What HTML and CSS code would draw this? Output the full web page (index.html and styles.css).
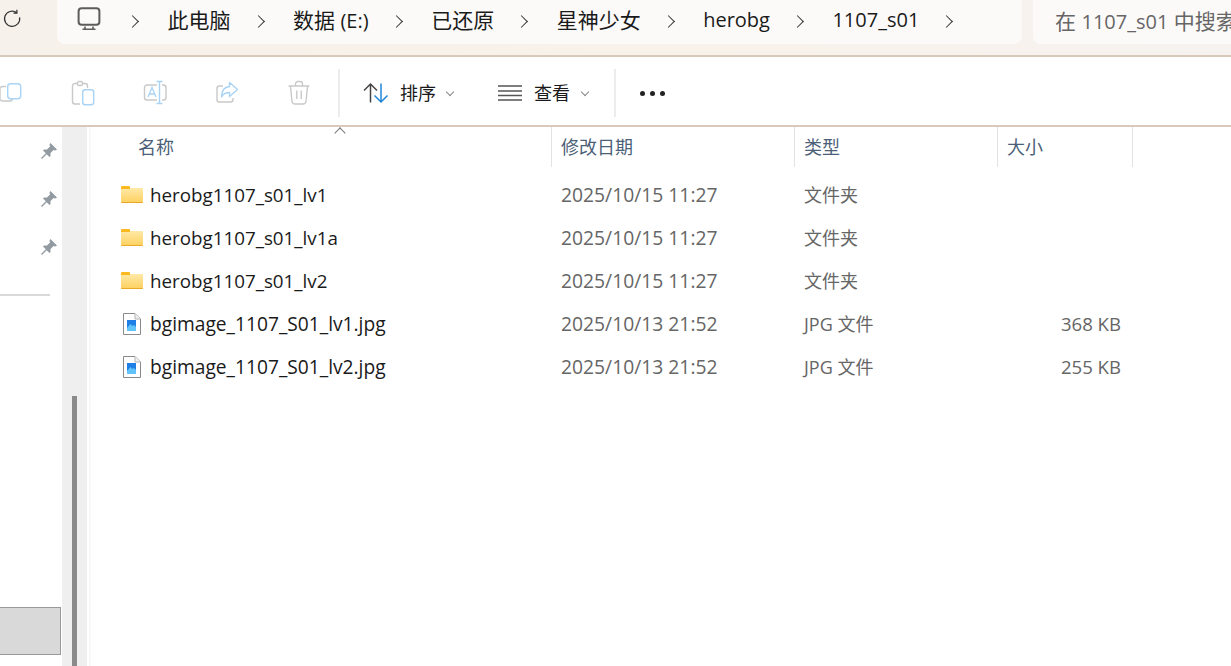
FILE: index.html
```html
<!DOCTYPE html>
<html lang="zh-CN">
<head>
  <meta charset="UTF-8">
  <title>1107_s01</title>
  <link rel="stylesheet" href="styles.css">
</head>
<body>

  <!-- Address bar -->
  <header class="topbar">
    <svg class="refresh" width="20" height="20" viewBox="0 0 20 20"><path d="M16.6 8.4A7.6 7.6 0 1 1 13.6 3.6M13.9 0.8V4.2H10.5" fill="none" stroke="#333" stroke-width="1.2"/></svg>
    <nav class="address">
      <svg class="monitor" width="24" height="24" viewBox="0 0 24 24"><rect x="1.6" y="1.2" width="20.8" height="16.6" rx="3" fill="none" stroke="#5c5c5c" stroke-width="2"/><path d="M8 19.5V22M16 19.5V22M5.5 22.3H18.5" fill="none" stroke="#5c5c5c" stroke-width="1.6"/></svg>
      <span class="chev"></span>
      <span class="crumb">此电脑</span>
      <span class="chev"></span>
      <span class="crumb">数据 <span class="latin">(E:)</span></span>
      <span class="chev"></span>
      <span class="crumb">已还原</span>
      <span class="chev"></span>
      <span class="crumb">星神少女</span>
      <span class="chev"></span>
      <span class="crumb latin">herobg</span>
      <span class="chev"></span>
      <span class="crumb latin">1107_s01</span>
      <span class="chev"></span>
    </nav>
    <div class="search">在 <span class="latin">1107_s01</span> 中搜索</div>
  </header>

  <!-- Command bar -->
  <section class="toolbar">
    <div class="tool-icons">
      <svg width="24" height="26" viewBox="0 0 24 26"><path d="M7 6.5H3.5A2.5 2.5 0 0 0 1 9V18.500A2.500 2.500 0 0 0 3.500 21H11A2.500 2.500 0 0 0 13.500 19" fill="none" stroke="#c9c9c9" stroke-width="1.400"/><rect x="8.700" y="3.700" width="13" height="15" rx="3" fill="none" stroke="#a9d3f5" stroke-width="1.400"/></svg>
      <svg width="24" height="26" viewBox="0 0 24 26"><path d="M7 3.500H4A2.500 2.500 0 0 0 1.500 6V21.500A2.500 2.500 0 0 0 4 24H9M16.500 8V6A2.500 2.500 0 0 0 14 3.500H11" fill="none" stroke="#c9c9c9" stroke-width="1.400"/><rect x="6.500" y="1.500" width="5" height="4" rx="1.500" fill="none" stroke="#c9c9c9" stroke-width="1.400"/><rect x="11.700" y="9.700" width="11" height="15" rx="2.500" fill="none" stroke="#a9d3f5" stroke-width="1.400"/></svg>
      <svg width="24" height="26" viewBox="0 0 24 26"><path d="M14 5H4A2.500 2.500 0 0 0 1.500 7.500V17.500A2.500 2.500 0 0 0 4 20H14M19 5H20.500A2.500 2.500 0 0 1 23 7.500V17.500A2.500 2.500 0 0 1 20.500 20H19" fill="none" stroke="#c9c9c9" stroke-width="1.400"/><path d="M5 17L9 7.500L13 17M6.300 14H11.700" fill="none" stroke="#a9d3f5" stroke-width="1.300"/><path d="M13.500 1.500H19.500M16.500 1.500V23.500M13.500 23.500H19.500" fill="none" stroke="#a9d3f5" stroke-width="1.400"/></svg>
      <svg width="24" height="26" viewBox="0 0 24 26"><path d="M8 6H4.500A2.500 2.500 0 0 0 2 8.500V19.500A2.500 2.500 0 0 0 4.500 22H15.500A2.500 2.500 0 0 0 18 19.500V18" fill="none" stroke="#c9c9c9" stroke-width="1.400"/><path d="M14.500 2.500L22.500 9.500L14.500 16.500V12.500C10.500 12.500 8 14 6.500 17C6.500 11 9.500 7 14.500 6.500Z" fill="none" stroke="#a9d3f5" stroke-width="1.400" stroke-linejoin="round"/></svg>
      <svg width="24" height="26" viewBox="0 0 24 26"><path d="M1.500 6H22.500M8.500 5.500V4A2.500 2.500 0 0 1 11 1.500H13A2.500 2.500 0 0 1 15.500 4V5.500M3.500 6.500L5 21.500A3 3 0 0 0 8 24H16A3 3 0 0 0 19 21.500L20.500 6.500M9.800 10.500V19M14.200 10.500V19" fill="none" stroke="#c9c9c9" stroke-width="1.400"/></svg>
    </div>
    <span class="tool-sep"></span>
    <div class="tool-btn sort-btn">
      <svg width="26" height="22" viewBox="0 0 26 22"><path d="M7.500 20.500V2M1 8.500L7.500 2L14 8.500" fill="none" stroke="#444" stroke-width="1.500"/><path d="M18 1.500V20M11.500 13.500L18 20L24.500 13.500" fill="none" stroke="#1f86d8" stroke-width="1.500"/></svg>
      <span class="tool-label">排序</span>
      <span class="caret"></span>
    </div>
    <div class="tool-btn view-btn">
      <svg width="24" height="18" viewBox="0 0 24 18"><path d="M0 2H24M0 7H24M0 11.500H24M0 16H24" fill="none" stroke="#555" stroke-width="1.300"/></svg>
      <span class="tool-label">查看</span>
      <span class="caret"></span>
    </div>
    <span class="tool-sep"></span>
    <div class="more"><i></i><i></i><i></i></div>
  </section>

  <div class="content">
    <!-- Navigation pane -->
    <aside class="nav-pane">
      <ul class="pins">
        <li><svg width="18" height="18" viewBox="0 0 18 18"><path d="M10.500 1L17 7.500L15.500 8.500L13.500 8L10.500 11L10.500 14L9.500 15L6.700 12.200L2 17L1 16L5.800 11.300L3 8.500L4 7.500L7 7.500L10 4.500L9.500 2.500Z" fill="#929ba1"/></svg></li>
        <li><svg width="18" height="18" viewBox="0 0 18 18"><path d="M10.500 1L17 7.500L15.500 8.500L13.500 8L10.500 11L10.500 14L9.500 15L6.700 12.200L2 17L1 16L5.800 11.300L3 8.500L4 7.500L7 7.500L10 4.500L9.500 2.500Z" fill="#929ba1"/></svg></li>
        <li><svg width="18" height="18" viewBox="0 0 18 18"><path d="M10.500 1L17 7.500L15.500 8.500L13.500 8L10.500 11L10.500 14L9.500 15L6.700 12.200L2 17L1 16L5.800 11.300L3 8.500L4 7.500L7 7.500L10 4.500L9.500 2.500Z" fill="#929ba1"/></svg></li>
      </ul>
      <hr class="nav-divider">
      <div class="nav-selected"></div>
    </aside>

    <!-- Scrollbar of the navigation pane -->
    <div class="nav-scroll"><div class="nav-thumb"></div></div>
    <div class="pane-edge"></div>

    <!-- File list -->
    <main class="files">
      <div class="sort-mark"></div>
      <div class="row head">
        <div class="cell name-head">名称</div>
        <div class="cell">修改日期</div>
        <div class="cell">类型</div>
        <div class="cell">大小</div>
      </div>
      <div class="list">
        <div class="row item">
          <div class="cell name"><span class="folder"></span>herobg1107_s01_lv1</div>
          <div class="cell date">2025/10/15 11:27</div>
          <div class="cell type">文件夹</div>
          <div class="cell size"></div>
        </div>
        <div class="row item">
          <div class="cell name"><span class="folder"></span>herobg1107_s01_lv1a</div>
          <div class="cell date">2025/10/15 11:27</div>
          <div class="cell type">文件夹</div>
          <div class="cell size"></div>
        </div>
        <div class="row item">
          <div class="cell name"><span class="folder"></span>herobg1107_s01_lv2</div>
          <div class="cell date">2025/10/15 11:27</div>
          <div class="cell type">文件夹</div>
          <div class="cell size"></div>
        </div>
        <div class="row item">
          <div class="cell name">
            <svg class="jpg" width="18" height="22" viewBox="0 0 18 22"><path d="M0.500 0.500H12L17.500 6V21.500H0.500Z" fill="#fff" stroke="#8a8a8a"/><path d="M12 0.500V6H17.500" fill="#f1f1f1" stroke="#b5b5b5"/><rect x="4" y="7" width="9" height="11" fill="#1f7fe6"/><path d="M4 15L7.500 11L9.500 13L11 12L13 14V18H4Z" fill="#62c3f8"/></svg>
            <span class="jpg-name">bgimage_1107_S01_lv1.jpg</span>
          </div>
          <div class="cell date">2025/10/13 21:52</div>
          <div class="cell type">JPG 文件</div>
          <div class="cell size">368 KB</div>
        </div>
        <div class="row item">
          <div class="cell name">
            <svg class="jpg" width="18" height="22" viewBox="0 0 18 22"><path d="M0.500 0.500H12L17.500 6V21.500H0.500Z" fill="#fff" stroke="#8a8a8a"/><path d="M12 0.500V6H17.500" fill="#f1f1f1" stroke="#b5b5b5"/><rect x="4" y="7" width="9" height="11" fill="#1f7fe6"/><path d="M4 15L7.500 11L9.500 13L11 12L13 14V18H4Z" fill="#62c3f8"/></svg>
            <span class="jpg-name">bgimage_1107_S01_lv2.jpg</span>
          </div>
          <div class="cell date">2025/10/13 21:52</div>
          <div class="cell type">JPG 文件</div>
          <div class="cell size">255 KB</div>
        </div>
      </div>
    </main>
  </div>

</body>
</html>
```

FILE: styles.css
```css
* {
  box-sizing: border-box;
  margin: 0;
  padding: 0;
}

html, body {
  height: 666px;
  overflow: hidden;
}

body {
  font-family: "Open Sans", "Noto Sans CJK SC", sans-serif;
  background-color: #fff;
  color: #1a1a1a;
  display: flex;
  flex-direction: column;
}

/* Address bar */
.topbar {
  height: 57px;
  flex-shrink: 0;
  display: flex;
  align-items: flex-start;
  background: linear-gradient(90deg, #f7f1eb, #f9f2ea 50%, #f6f2ef);
  border-bottom: 2px solid #d8c9ba;
  overflow: hidden;
}

.refresh {
  margin: 9px 0 0 3px;
  flex-shrink: 0;
}

.address {
  width: 965px;
  height: 44px;
  margin-left: 34px;
  padding: 0 0 2px 20px;
  flex-shrink: 0;
  display: flex;
  align-items: center;
  background-color: #fcfaf9;
  border-radius: 0 0 8px 8px;
  font-size: 21px;
}

.monitor {
  margin: -4px 4px 0 0;
}

.chev {
  width: 9px;
  height: 9px;
  margin: 0 30.5px 0 23px;
  border-top: 1.5px solid #333;
  border-right: 1.5px solid #333;
  transform: rotate(45deg);
  flex-shrink: 0;
}

.crumb {
  padding-bottom: 4px;
  white-space: nowrap;
}

.latin {
  font-size: 20px;
}

.search {
  width: 240px;
  height: 44px;
  margin-left: 11px;
  padding: 5px 0 0 22px;
  flex-shrink: 0;
  background-color: #fcfaf9;
  border-radius: 0 0 0 8px;
  color: #666;
  font-size: 21px;
  white-space: nowrap;
}

/* Command bar */
.toolbar {
  height: 70px;
  padding-top: 4px;
  flex-shrink: 0;
  display: flex;
  align-items: center;
  border-bottom: 2px solid #d8c9ba;
  font-size: 18px;
}

.tool-icons {
  width: 339px;
  margin-left: -1px;
  display: flex;
  gap: 48px;
}

.tool-sep {
  width: 2px;
  height: 48px;
  background-color: #ececec;
}

.tool-btn {
  display: flex;
  align-items: center;
}

.tool-label {
  padding-bottom: 2px;
}

.sort-btn {
  width: 158px;
  padding-left: 23px;
  gap: 11px;
}

.view-btn {
  width: 116px;
  gap: 12px;
}

.caret {
  width: 6px;
  height: 6px;
  margin: -3px 0 0 0;
  border-right: 1px solid #888;
  border-bottom: 1px solid #888;
  transform: rotate(45deg);
}

.more {
  margin-left: 24px;
  display: flex;
  gap: 5px;
}

.more i {
  width: 5px;
  height: 5px;
  border-radius: 50%;
  background-color: #222;
}

/* Main area */
.content {
  flex: 1;
  display: flex;
  min-height: 0;
}

.nav-pane {
  width: 62px;
  flex-shrink: 0;
  display: flex;
  flex-direction: column;
}

.pins {
  list-style: none;
  margin-top: 15px;
  padding-left: 40px;
}

.pins li {
  height: 48px;
}

.nav-divider {
  width: 50px;
  margin-top: 8px;
  border: none;
  border-top: 2px solid #d9d9d9;
}

.nav-selected {
  width: 61px;
  height: 48px;
  margin-top: auto;
  margin-bottom: 11px;
  background-color: #d9d9d9;
  border: 1px solid #999;
  border-left: none;
}

.nav-scroll {
  width: 25px;
  flex-shrink: 0;
  padding: 269px 10px 0;
  background-color: #efefef;
}

.nav-thumb {
  height: 100%;
  background-color: #8a8a8a;
}

.pane-edge {
  width: 4px;
  flex-shrink: 0;
  border-right: 2px solid #f8f8f8;
}

/* File list */
.files {
  flex: 1;
  position: relative;
}

.sort-mark {
  position: absolute;
  left: 245px;
  top: 2px;
  width: 8px;
  height: 8px;
  border-top: 1px solid #777;
  border-left: 1px solid #777;
  transform: rotate(45deg);
}

.row {
  display: grid;
  grid-template-columns: 461px 243px 203px 135px;
  align-items: center;
}

.head {
  height: 40px;
  color: #4c5f78;
  font-size: 18px;
}

.head .cell {
  height: 40px;
  padding-left: 9px;
  line-height: 40px;
  border-right: 1px solid #e3e3e3;
}

.head .name-head {
  padding-left: 47px;
}

.list {
  padding-top: 6px;
}

.item {
  height: 43px;
  color: #666;
  font-size: 18px;
}

.item .cell {
  padding-left: 9px;
  white-space: nowrap;
}

.item .date {
  font-size: 19.3px;
}

.item .type {
  padding-bottom: 2px;
}

.item .name {
  padding-left: 30px;
  display: flex;
  align-items: center;
  color: #1a1a1a;
  font-size: 18.8px;
}

.jpg-name {
  font-size: 19.2px;
}

.item .size {
  padding-right: 12px;
  text-align: right;
  font-size: 18.6px;
}

.folder {
  position: relative;
  width: 22px;
  height: 15px;
  margin: 1px 7px 0 0;
  background: linear-gradient(#ffe9a6, #fdd264);
  border-bottom: 1px solid #e9a825;
  border-radius: 1px;
}

.folder::before {
  content: "";
  position: absolute;
  left: 0;
  top: -2px;
  width: 9px;
  height: 3px;
  background-color: #fbb81f;
  border-radius: 1px 1px 0 0;
}

.jpg {
  margin: 0 9px 0 2px;
}
```
